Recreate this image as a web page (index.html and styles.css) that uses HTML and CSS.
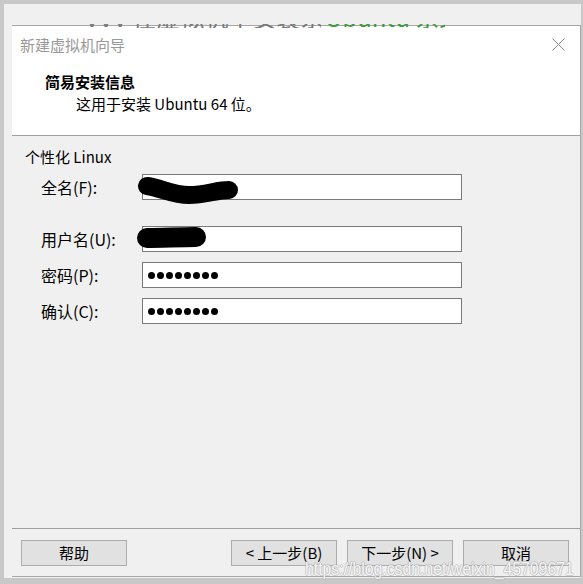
FILE: index.html
```html
<!DOCTYPE html>
<html lang="zh-CN">
<head>
<meta charset="utf-8">
<title>新建虚拟机向导</title>
<link rel="stylesheet" href="styles.css">
</head>
<body>
<div class="frame">
  <div class="remnant"><span class="rem-dark">VVV 在虚拟机中安装系统</span><span class="rem-green">Ubuntu 系统</span></div>
  <div class="dialog">
    <div class="header">
      <div class="titlebar">
        <span class="title">新建虚拟机向导</span>
        <svg class="close" width="13" height="13" viewBox="0 0 13 13"><path d="M0.5 0.5 L12.5 12.5 M12.5 0.5 L0.5 12.5" stroke="#8a8a8a" stroke-width="1" fill="none"/></svg>
      </div>
      <div class="heading">简易安装信息</div>
      <div class="sub">这用于安装 Ubuntu 64 位。</div>
    </div>
    <div class="body">
      <div class="group-title">个性化 Linux</div>
      <div class="row row-first">
        <span class="label">全名(F):</span>
        <div class="input">
          <svg class="scribble" width="120" height="40" viewBox="0 0 120 40"><path d="M10 16 C24 18 36 25 52 25 C68 25 80 20 92 20" stroke="#000" stroke-width="18" stroke-linecap="round" fill="none"/></svg>
        </div>
      </div>
      <div class="row row-second">
        <span class="label">用户名(U):</span>
        <div class="input">
          <svg class="scribble" width="120" height="40" viewBox="0 0 120 40"><path d="M10 12 C24 12 44 11 59 11" stroke="#000" stroke-width="20" stroke-linecap="round" fill="none"/></svg>
        </div>
      </div>
      <div class="row">
        <span class="label">密码(P):</span>
        <div class="input"><div class="dots"><i></i><i></i><i></i><i></i><i></i><i></i><i></i><i></i></div></div>
      </div>
      <div class="row">
        <span class="label">确认(C):</span>
        <div class="input"><div class="dots"><i></i><i></i><i></i><i></i><i></i><i></i><i></i><i></i></div></div>
      </div>
    </div>
    <div class="footer">
      <button class="btn">帮助</button>
      <div class="btn-group">
        <button class="btn">&lt; 上一步(B)</button>
        <button class="btn">下一步(N) &gt;</button>
        <button class="btn">取消</button>
      </div>
    </div>
  </div>
  <div class="watermark">https://blog.csdn.net/weixin_45709671</div>
</div>
</body>
</html>
```
FILE: styles.css
```css
* { box-sizing: border-box; }
html, body { margin: 0; padding: 0; }
body {
  width: 583px;
  height: 584px;
  background: #c8c8c8;
  font-family: "Noto Sans CJK SC", "Noto Sans", sans-serif;
  font-size: 15px;
  color: #000;
  overflow: hidden;
}
.frame {
  position: relative;
  margin: 4px 0 0 4px;
  width: 577px;
  height: 574px;
  background: #f0f0f0;
  padding: 21px 0 1px 8px;
}
.remnant {
  position: absolute;
  left: 81px;
  top: 1px;
  width: 370px;
  height: 24px;
  clip-path: inset(19px 0 1px 0);
  white-space: nowrap;
  font-size: 24px;
  line-height: 24px;
  z-index: 2;
  display: flex;
  align-items: flex-start;
}
.remnant span {
  display: block;
  overflow: hidden;
  height: 24px;
}
.rem-dark { color: #7a7a7a; width: 236px; }
.rem-green { color: #3f9a3f; width: 120px; margin-left: 4px; }
.dialog {
  width: 569px;
  height: 552px;
  border-top: 1px solid #a7a7a7;
  border-right: 1px solid #a7a7a7;
  border-bottom: 1px solid #a7a7a7;
  display: flex;
  flex-direction: column;
}
.header {
  background: #fff;
  height: 110px;
  border-bottom: 1px solid #a0a0a0;
}
.titlebar {
  display: flex;
  justify-content: space-between;
  align-items: flex-start;
  padding: 9px 15px 0 8px;
  height: 29px;
}
.title { color: #999; line-height: 20px; }
.close { margin-top: 3px; }
.heading {
  font-weight: bold;
  line-height: 20px;
  margin-top: 17px;
  padding-left: 33px;
}
.sub {
  line-height: 20px;
  margin-top: 2px;
  padding-left: 64px;
}
.body {
  height: 392px;
  padding: 11px 0 0 13px;
}
.group-title { line-height: 20px; margin-bottom: 7px; }
.row {
  display: flex;
  align-items: center;
  margin-top: 10px;
}
.row-first { margin-top: 0; }
.row-second { margin-top: 26px; }
.label {
  width: 117px;
  padding-left: 16px;
  font-size: 16px;
  line-height: 20px;
}
.input {
  position: relative;
  width: 320px;
  height: 26px;
  background: #fff;
  border: 1px solid #7a7a7a;
  display: flex;
  align-items: center;
  padding-left: 5px;
}
.scribble {
  position: absolute;
  left: -6px;
  top: -5px;
}
.row-second .scribble { top: -1px; }
.dots { display: flex; gap: 2px; }
.dots i {
  display: block;
  width: 7px;
  height: 7px;
  border-radius: 50%;
  background: #000;
}
.footer {
  flex: 1;
  border-top: 1px solid #a0a0a0;
  display: flex;
  justify-content: space-between;
  align-items: flex-start;
  padding: 11px 11px 0 9px;
}
.btn-group { display: flex; gap: 10px; }
.btn {
  width: 106px;
  height: 26px;
  background: #e1e1e1;
  border: 1px solid #adadad;
  font-family: "Noto Sans CJK SC", "Noto Sans", sans-serif;
  font-size: 15px;
  color: #000;
  padding: 0;
  line-height: 22px;
}
.watermark {
  position: absolute;
  left: 301px;
  top: 554px;
  font-family: "Liberation Sans", Arial, sans-serif;
  font-size: 15.8px;
  line-height: 20px;
  color: rgba(255, 255, 255, 0.9);
  text-shadow: 1px 0 0 rgba(160, 160, 160, 0.45), -1px 0 0 rgba(160, 160, 160, 0.45), 0 1px 0 rgba(160, 160, 160, 0.45), 0 -1px 0 rgba(160, 160, 160, 0.45);
  white-space: nowrap;
  transform: scaleY(1.12);
  transform-origin: left top;
}
```
